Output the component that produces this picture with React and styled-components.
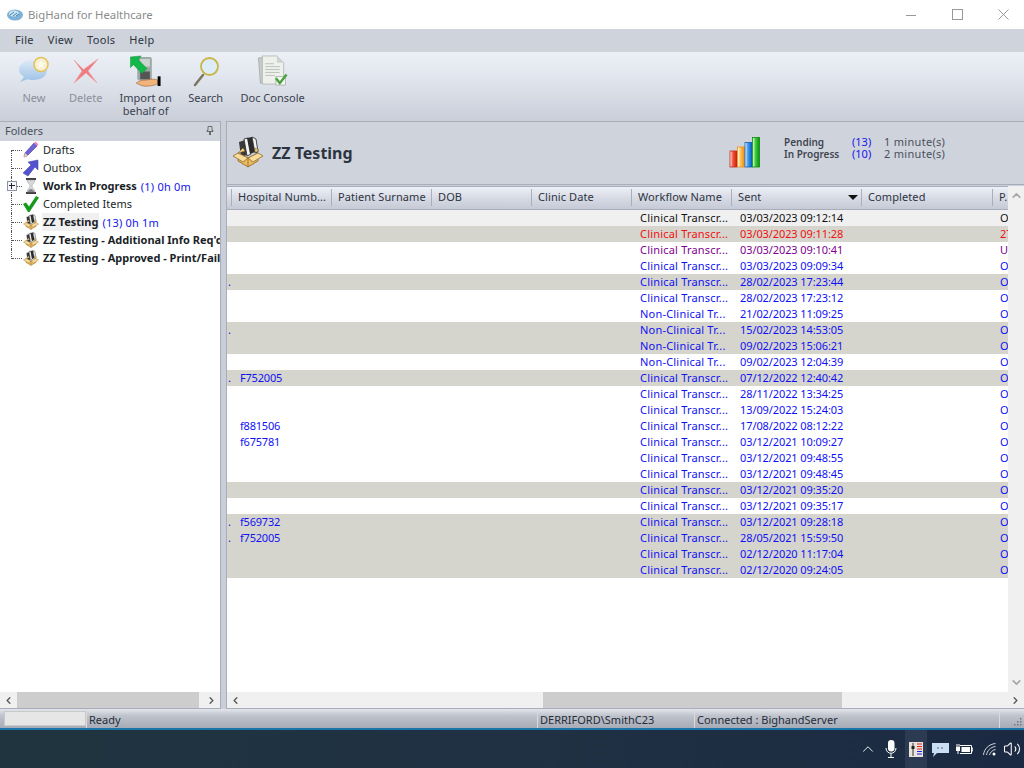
import React from "react";
import styled, { createGlobalStyle } from "styled-components";
import { ChevronLeft, ChevronRight, ChevronUp, ChevronDown, Volume2 } from "lucide-react";

const Global = createGlobalStyle`
  html, body { margin: 0; padding: 0; background: #fff; }
  * { box-sizing: border-box; }
  body { font-family: "Noto Sans", "Liberation Sans", sans-serif; font-size: 11px; }
`;

const Windowed = styled.div`
  width: 1024px; height: 768px; display: flex; flex-direction: column; overflow: hidden; background: #c9ced9;
`;
const TitleBar = styled.header`
  height: 29px; flex: none; background: #fff; display: flex; align-items: center; padding-left: 7px; gap: 5px; overflow: hidden;
`;
const AppTitle = styled.span` font-size: 11.3px; color: #8b8b8b; flex: 1; `;
const WinButton = styled.span`
  width: 46px; height: 29px; flex: none; display: flex; align-items: center; justify-content: center; margin-left: -5px; margin-right: ${p => p.$mr || 0}px;
`;
const MenuBar = styled.nav`
  height: 23px; flex: none; background: #cfd3dc; display: flex; align-items: center; padding: 0 0 2px 8px;
`;
const MenuItem = styled.span` padding: 0 7px; color: #2d3440; letter-spacing: .3px; `;
const Toolbar = styled.div`
  height: 69px; flex: none; padding: 3px 0 0 8px; display: flex; align-items: flex-start;
  background: linear-gradient(#eceff6, #e2e6ee 35%, #c9ced9);
`;
const ToolButton = styled.button`
  min-width: 51px; padding: 0 ${p => p.$pad ?? 9}px; border: 0; background: none; display: flex; flex-direction: column; align-items: center;
  font: inherit; line-height: 13px; color: ${p => (p.$off ? "#8b909b" : "#3a414d")};
  svg { display: block; margin-bottom: 4px; }
`;
const Main = styled.main`
  flex: 1; min-height: 0; display: grid; grid-template-columns: 221px 803px; column-gap: 0;
`;
const FolderPanel = styled.aside`
  display: flex; flex-direction: column; border-top: 1px solid #a8adb9; border-right: 1px solid #a8adb9; border-bottom: 1px solid #a8adb9; min-height: 0;
`;
const PanelHead = styled.div`
  height: 19px; flex: none; padding: 0 6px 2px 5px; display: flex; align-items: center; justify-content: space-between;
  color: #4a505c; background: #cfd3dc;
`;
const Tree = styled.ul`
  flex: 1; margin: 0; padding: 0; list-style: none; background: #fff; overflow: hidden;
`;
const TreeRow = styled.li`
  height: 18px; display: flex; align-items: center; white-space: nowrap; position: relative;
`;
const Guide = styled.span`
  width: 22px; height: 18px; flex: none; position: relative;
  &::before { content: ""; position: absolute; left: 11px; top: ${p => (p.$first ? 9 : 0)}px; height: ${p => (p.$first || p.$last ? 10 : 18)}px; border-left: 1px dotted #555; }
  &::after { content: ""; position: absolute; left: 12px; top: 9px; width: 10px; border-top: 1px dotted #555; }
`;
const Expander = styled.span`
  position: absolute; left: 7px; top: 4px; width: 10px; height: 10px; z-index: 1; background: #f4f5fa; border: 1px solid #8c92a0;
  &::before { content: ""; position: absolute; left: 1px; top: 3px; width: 6px; height: 2px; border-top: 1px solid #223; }
  &::after { content: ""; position: absolute; left: 3px; top: 1px; height: 6px; border-left: 1px solid #223; }
`;
const IconSlot = styled.span` width: 17px; height: 18px; flex: none; display: flex; align-items: center; justify-content: center; `;
const Label = styled.span`
  margin-left: 3px; padding: 0 1px; line-height: 18px; color: #1b1f28;
  font-weight: ${p => (p.$bold ? 700 : 400)};
  background: ${p => (p.$selected ? "#f0f0f0" : "transparent")};
`;
const Count = styled.span` margin-left: 3px; color: #1515ee; letter-spacing: .2px; `;
const HScroll = styled.div`
  height: 16px; flex: none; background: #f0f0f0; display: flex; align-items: center; justify-content: space-between; position: relative; color: #5a5a5a;
  svg { flex: none; margin: 0 3px; }
`;
const Thumb = styled.span`
  position: absolute; top: 0; bottom: 0; left: ${p => p.$l}px; width: ${p => p.$w}px; background: #cdcdcd;
`;
const RightPanel = styled.section`
  margin-left: 5px; display: flex; flex-direction: column; min-height: 0;
  border-top: 1px solid #a8adb9; border-left: 1px solid #a8adb9; border-bottom: 1px solid #a8adb9;
`;
const Banner = styled.div`
  height: 63px; flex: none; border-bottom: 1px solid #a8adb9; background: #cfd3dc; display: flex; align-items: center; padding: 0 0 2px 5px;
`;
const BannerTitle = styled.h1` margin: 2px 0 0 8px; flex: none; width: 457px; font-size: 16px; font-weight: 700; color: #2c3440; `;
const Stats = styled.div`
  margin: 0 0 8px 23px; display: grid; grid-template-columns: 68px 32px auto; line-height: 12px; color: #4a505c;
  b { font-size: 10px; font-weight: 600; color: #3f4652; }
  i { font-style: normal; color: #1515ee; }
  span { letter-spacing: .3px; }
`;
const TableWrap = styled.div`
  flex: 1; min-height: 0; display: flex; margin-top: 1px; background: #fff;
`;
const TableArea = styled.div` width: 781px; flex: none; display: flex; flex-direction: column; `;
const columns = "4px 100px 100px 100px 100px 100px 130px 131px 16px";
const HeadRow = styled.div`
  height: 24px; flex: none; display: grid; grid-template-columns: ${columns};
  border-top: 1px solid #a8adb9; border-bottom: 1px solid #a8adb9; background: linear-gradient(#eef0f7, #d5d9e3 55%, #c5cad6);
`;
const HeadCell = styled.div`
  border-left: ${p => (p.$nosep ? "0" : "1px solid #a9aeba")}; margin: 2px 0 3px; padding-left: 6px; line-height: 15px; color: #2d3440;
  white-space: nowrap; overflow: hidden; position: relative; letter-spacing: .1px;
`;
const SortArrow = styled.span`
  position: absolute; right: 3px; top: 6px; width: 0; height: 0; border-left: 5px solid transparent; border-right: 5px solid transparent; border-top: 5px solid #111;
`;
const Row = styled.div`
  height: 16px; display: grid; grid-template-columns: ${columns}; line-height: 16px;
  background: ${p => p.$bg}; color: ${p => p.$fg};
`;
const Cell = styled.div`
  padding-left: ${p => p.$pl ?? 9}px; white-space: nowrap; overflow: hidden; letter-spacing: ${p => p.$track || 0}px;
`;
const VScroll = styled.div`
  width: 16px; flex: none; margin-top: 0; background: #f0f0f0; display: flex; flex-direction: column; justify-content: space-between; align-items: center; padding: 3px 0; color: #a6a6a6;
`;
const Rows = styled.div` flex: 1; overflow: hidden; `;
const StatusBar = styled.footer`
  height: 19px; flex: none; display: flex; overflow: hidden; background: linear-gradient(#e4e6ec, #bfc3cc 35%, #a6abb6); color: #262c38; line-height: 21px;
`;
const StatusInset = styled.span` width: 82px; height: 15px; margin: 2px 0 0 4px; background: #e6e6e6; border: 1px solid #c9c9c9; `;
const StatusCell = styled.span`
  width: ${p => p.$w}px; flex: none; padding-left: 2px; border-left: 1px solid #d8dae0; overflow: hidden; white-space: nowrap;
`;
const Grip = styled.span` flex: 1; border-left: 1px solid #d8dae0; display: flex; align-items: flex-end; justify-content: flex-end; padding: 0 1px 1px 0; `;
const TaskBar = styled.div`
  height: 40px; flex: none; border-top: 2px solid #1a75a8; background: linear-gradient(90deg, #20343f, #1f3143 50%, #1b2a42);
  display: flex; align-items: center; justify-content: flex-end;
`;
const Tray = styled.span`
  width: ${p => p.$w}px; height: 38px; flex: none; display: flex; align-items: center; justify-content: center; color: #fff; padding-right: ${p => p.$pr || 0}px;
  background: ${p => (p.$on ? "#2d3b52" : "none")};
`;

const Logo = () => (
  <svg width="16" height="12" viewBox="0 0 16 12">
    <ellipse cx="8" cy="6" rx="8" ry="5.5" fill="#7fb2d6" />
    <ellipse cx="7" cy="4.5" rx="5" ry="3" fill="#cfe6f5" />
    <path d="M3 6l4-3M6 7l4-3M9 7l3-2" stroke="#3d7fb0" strokeWidth="1" />
  </svg>
);
const NewIcon = () => (
  <svg width="34" height="32" viewBox="0 0 34 32">
    <defs><linearGradient id="nb" x1="0" y1="0" x2="0" y2="1"><stop offset="0" stopColor="#dceaf8" /><stop offset="1" stopColor="#9cc1e4" /></linearGradient></defs>
    <path d="M2 15C2 8 9 5 16 5s14 3 14 10-7 10-14 10c-2 0-4 0-5-1l-8 3 4-5c-2-2-5-4-5-7z" fill="url(#nb)" />
    <circle cx="24" cy="9.500" r="7" fill="#f7efce" stroke="#e0c25a" strokeWidth="1.500" />
    <path d="M24 5l1.200 3 3.300.3-2.500 2 .8 3-2.800-1.700-2.800 1.700.8-3-2.500-2 3.300-.3z" fill="#fdfbf0" />
  </svg>
);
const DeleteIcon = () => (
  <svg width="30" height="32" viewBox="0 0 30 32">
    <path d="M3 5l9.500 9.500L27 4 17 16l9 12-11-10L3 28l8-12z" fill="#ee7c80" stroke="#f0a0a2" strokeWidth=".6" />
  </svg>
);
const ImportIcon = () => (
  <svg width="34" height="32" viewBox="0 0 34 33">
    <rect x="8" y="2" width="15" height="24" rx="2" fill="#9da9a4" />
    <rect x="11" y="4" width="10" height="8" fill="#cbd5cf" />
    <rect x="11" y="17" width="10" height="8" fill="#555" />
    <path d="M1 2l11-1-3 4 9 9-5 5-9-9-3 3z" fill="#12b84a" stroke="#0b8c36" strokeWidth=".5" />
    <path d="M7 29c3-3 6-3 9-3l7-1c3 0 5 0 6 1v4c-3 1-6 2-10 2-4 1-8-1-12-3z" fill="#f2b27c" stroke="#a06b3f" strokeWidth=".7" />
    <rect x="29" y="22" width="3" height="10" fill="#000" />
  </svg>
);
const SearchIcon = () => (
  <svg width="30" height="32" viewBox="0 0 30 32">
    <path d="M12 20L4 30" stroke="#7d7462" strokeWidth="2.500" strokeLinecap="round" />
    <circle cx="18.500" cy="11.500" r="8.500" fill="#dcecf8" stroke="#c9b64a" strokeWidth="1.800" />
  </svg>
);
const DocIcon = () => (
  <svg width="34" height="32" viewBox="0 0 34 33">
    <path d="M2 3l18-1 6 7v20H4z" fill="#c7cdc8" stroke="#8f9590" strokeWidth=".6" />
    <path d="M6 1h15l7 7v22H6z" fill="#eef0ec" stroke="#9aa09b" strokeWidth=".6" />
    <path d="M21 1v7h7z" fill="#cfd3cf" />
    <path d="M9 9h9M9 12h15M9 15h15M9 18h15M9 21h10" stroke="#b9c2bb" strokeWidth="1" />
    <rect x="20" y="22" width="10" height="9" fill="#f4f6f3" stroke="#8f9590" strokeWidth=".6" />
    <path d="M20 24l4 5 7-9" fill="none" stroke="#4aa13c" strokeWidth="2.500" />
  </svg>
);
const PencilIcon = () => (
  <svg width="17" height="18" viewBox="0 0 17 18">
    <path d="M2 16l1-4L12 2l3 3L5 15z" fill="#6f62d8" stroke="#3d3595" strokeWidth=".6" />
    <path d="M12 2l1.500-1.500 3 3L15 5z" fill="#f07fc0" />
    <path d="M2 16l1-4 3 3z" fill="#f1d7b0" />
  </svg>
);
const OutboxIcon = () => (
  <svg width="17" height="18" viewBox="0 0 17 18">
    <path d="M16 1v10l-3-3-7 9-5-3 8-8-3-3z" fill="#5353cf" stroke="#3b3ba8" strokeWidth=".5" />
  </svg>
);
const HourglassIcon = () => (
  <svg width="14" height="18" viewBox="0 0 14 18">
    <rect x="2" y="1" width="10" height="2" fill="#3e3e44" />
    <rect x="2" y="15" width="10" height="2" fill="#3e3e44" />
    <path d="M3 3h8c0 3-3 4-3 6s3 3 3 6H3c0-3 3-4 3-6S3 6 3 3z" fill="#d5d7da" stroke="#888" strokeWidth=".4" />
    <path d="M4 15c0-2 2-3 3-3s3 1 3 3z" fill="#85858c" />
  </svg>
);
const CheckIcon = () => (
  <svg width="17" height="18" viewBox="0 0 17 18">
    <path d="M1 9l3-1.500 3 4L14 1l3 1.500L7.500 17H6z" fill="#159a1c" />
  </svg>
);
const BoxIcon = ({ size = 16 }) => (
  <svg width={size} height={size} viewBox="0 0 32 32">
    <path d="M7 6l6-2 2 15-6 2z" fill="#3a3a3a" />
    <path d="M12 3l4-1 3 16-4 2z" fill="#f4f4f4" stroke="#222" strokeWidth=".8" />
    <path d="M15 2l5-1 3 15-5 2z" fill="#2c2c2c" />
    <path d="M20 1l4 2 2 13-3 1z" fill="#f4f4f4" stroke="#222" strokeWidth=".8" />
    <path d="M6 17l10 5 10-5v8l-10 6-10-6z" fill="#eab95e" stroke="#8f6a2c" strokeWidth=".8" />
    <path d="M16 22v9" stroke="#8f6a2c" strokeWidth=".8" />
    <path d="M6 17L1 20l10 6 5-4zM26 17l5 3-10 6-5-4z" fill="#f7dc9c" stroke="#8f6a2c" strokeWidth=".8" />
    <path d="M6 17l5-5 2 3zM27 14l-4-2v4z" fill="#f4d58b" stroke="#8f6a2c" strokeWidth=".6" />
  </svg>
);
const BarsIcon = () => (
  <svg width="32" height="32" viewBox="0 0 32 32">
    <defs>
      {[["r", "#f7553b", "#c81d10"], ["o", "#fdc65c", "#ee8b16"], ["b", "#3f9ff0", "#0b5fb5"], ["g", "#43d043", "#0a8a0a"]].map(([id, a, b]) => (
        <linearGradient key={id} id={id} x1="0" x2="1" y1="0" y2="0"><stop offset="0" stopColor="#fff" /><stop offset=".4" stopColor={a} /><stop offset="1" stopColor={b} /></linearGradient>
      ))}
    </defs>
    <rect x="1" y="15" width="7" height="16" fill="url(#r)" stroke="#b92a1a" strokeWidth=".8" />
    <rect x="8.500" y="11" width="7" height="20" fill="url(#o)" stroke="#e49120" strokeWidth=".8" />
    <rect x="16" y="6.500" width="7" height="24.500" fill="url(#b)" stroke="#0d5db0" strokeWidth=".8" />
    <rect x="23.500" y="1.500" width="7" height="29.500" fill="url(#g)" stroke="#0b8c0b" strokeWidth=".8" />
  </svg>
);
const Pin = () => (
  <svg width="8" height="9" viewBox="0 0 8 9"><path d="M2 .5h4v4h1v1H1v-1h1zM3.500 5.500h1V9h-1z" fill="none" stroke="#555" strokeWidth=".8" /></svg>
);
const MicIcon = () => (
  <svg width="12" height="18" viewBox="0 0 12 18">
    <rect x="3" y="0" width="6.500" height="11.500" rx="3.200" fill="#fff" />
    <path d="M1 8c0 7 10 7 10 0M6 13.500V17M3 17.500h6" fill="none" stroke="#fff" strokeWidth="1" />
  </svg>
);
const MixerIcon = () => (
  <svg width="14" height="15" viewBox="0 0 14 15">
    <rect width="14" height="15" fill="#e8e3dc" />
    <path d="M4 1v13" stroke="#333" strokeWidth="1" /><rect x="2.500" y="4" width="3" height="3" fill="#222" />
    <path d="M8 2h5M8 4.500h5M8 7h5" stroke="#d22" strokeWidth="1" />
    <path d="M8 9.500h5M8 12h5" stroke="#22d" strokeWidth="1" />
  </svg>
);
const ChatIcon = () => (
  <svg width="17" height="15" viewBox="0 0 17 15">
    <path d="M0 1h17v10H5l-4 4 1-4H0z" fill="#c9def2" />
    <circle cx="6" cy="6" r=".8" fill="#556" /><circle cx="10" cy="6" r=".8" fill="#556" />
  </svg>
);
const BatteryIcon = () => (
  <svg width="17" height="11" viewBox="0 0 17 11">
    <path d="M4 1.500h11.500v8H4M15.500 4h1.300v3h-1.300" fill="none" stroke="#fff" strokeWidth="1" />
    <rect x="5.500" y="3" width="8.500" height="5" fill="#fff" />
    <rect x="0" y="3" width="4" height="4" fill="#fff" /><path d="M1 3V0M3 3V0M2 7v3" stroke="#fff" strokeWidth="1" />
  </svg>
);
const WifiIcon = () => (
  <svg width="13" height="13" viewBox="0 0 13 13">
    <path d="M.5 12C1 6 6 1 12.500.5M3.500 12c.5-4 4-8 9-8.500M6.500 12c.5-2 2.500-5 6-5.500" fill="none" stroke="#cfd3da" strokeWidth="1" />
    <circle cx="11" cy="11" r="1.500" fill="#fff" />
  </svg>
);
const GripIcon = () => (
  <svg width="12" height="12" viewBox="0 0 12 12" fill="#70757f">
    {[[9, 3], [6, 6], [9, 6], [3, 9], [6, 9], [9, 9]].map(([x, y]) => <rect key={x + "-" + y} x={x} y={y} width="1.500" height="1.500" />)}
  </svg>
);
const Minimize = () => <svg width="10" height="10" viewBox="0 0 10 10"><path d="M0 5.500h10" stroke="#999" /></svg>;
const Maximize = () => <svg width="11" height="11" viewBox="0 0 11 11"><rect x=".5" y=".5" width="10" height="10" fill="none" stroke="#999" /></svg>;
const CloseX = () => <svg width="11" height="11" viewBox="0 0 11 11"><path d="M.5.5l10 10M10.500.5l-10 10" stroke="#999" /></svg>;

const folders = [
  { icon: <PencilIcon />, name: "Drafts", first: true },
  { icon: <OutboxIcon />, name: "Outbox" },
  { icon: <HourglassIcon />, name: "Work In Progress", bold: true, count: "(1) 0h 0m", expand: true },
  { icon: <CheckIcon />, name: "Completed Items" },
  { icon: <BoxIcon />, name: "ZZ Testing", bold: true, selected: true, count: "(13) 0h 1m" },
  { icon: <BoxIcon />, name: "ZZ Testing - Additional Info Req'd", bold: true },
  { icon: <BoxIcon />, name: "ZZ Testing - Approved - Print/Fail", bold: true, last: true },
];
const heads = ["Hospital Numb...", "Patient Surname", "DOB", "Clinic Date", "Workflow Name", "Sent", "Completed", "P."];
const CT = "Clinical Transcr...";
const NC = "Non-Clinical Tr...";
const rows = [
  [CT, "03/03/2023 09:12:14", "O", "", "", "#f0f0f0", "#111"],
  [CT, "03/03/2023 09:11:28", "27", "", "", "#d5d5cd", "#f01010"],
  [CT, "03/03/2023 09:10:41", "U", "", "", "#fff", "#800090"],
  [CT, "03/03/2023 09:09:34", "O"],
  [CT, "28/02/2023 17:23:44", "O", "", ".", "#d5d5cd"],
  [CT, "28/02/2023 17:23:12", "O"],
  [NC, "21/02/2023 11:09:25", "O"],
  [NC, "15/02/2023 14:53:05", "O", "", ".", "#d5d5cd"],
  [NC, "09/02/2023 15:06:21", "O", "", "", "#d5d5cd"],
  [NC, "09/02/2023 12:04:39", "O"],
  [CT, "07/12/2022 12:40:42", "O", "F752005", "..", "#d5d5cd"],
  [CT, "28/11/2022 13:34:25", "O"],
  [CT, "13/09/2022 15:24:03", "O"],
  [CT, "17/08/2022 08:12:22", "O", "f881506"],
  [CT, "03/12/2021 10:09:27", "O", "f675781"],
  [CT, "03/12/2021 09:48:55", "O"],
  [CT, "03/12/2021 09:48:45", "O"],
  [CT, "03/12/2021 09:35:20", "O", "", "", "#d5d5cd"],
  [CT, "03/12/2021 09:35:17", "O"],
  [CT, "03/12/2021 09:28:18", "O", "f569732", ".", "#d5d5cd"],
  [CT, "28/05/2021 15:59:50", "O", "f752005", ".", "#d5d5cd"],
  [CT, "02/12/2020 11:17:04", "O", "", "", "#d5d5cd"],
  [CT, "02/12/2020 09:24:05", "O", "", "", "#d5d5cd"],
];

export default function App() {
  return (
    <Windowed>
      <Global />
      <TitleBar>
        <Logo />
        <AppTitle>BigHand for Healthcare</AppTitle>
        <WinButton><Minimize /></WinButton>
        <WinButton><Maximize /></WinButton>
        <WinButton $mr={-2}><CloseX /></WinButton>
      </TitleBar>
      <MenuBar>
        {["File", "View", "Tools", "Help"].map(m => <MenuItem key={m}>{m}</MenuItem>)}
      </MenuBar>
      <Toolbar>
        <ToolButton $off><NewIcon />New</ToolButton>
        <ToolButton $off><DeleteIcon />Delete</ToolButton>
        <ToolButton $pad={8}><ImportIcon />Import on<br />behalf of</ToolButton>
        <ToolButton $pad={8.5}><SearchIcon />Search</ToolButton>
        <ToolButton><DocIcon />Doc Console</ToolButton>
      </Toolbar>
      <Main>
        <FolderPanel>
          <PanelHead>Folders<Pin /></PanelHead>
          <Tree>
            {folders.map(f => (
              <TreeRow key={f.name}>
                <Guide $first={f.first} $last={f.last} />
                {f.expand && <Expander />}
                <IconSlot>{f.icon}</IconSlot>
                <Label $bold={f.bold} $selected={f.selected}>{f.name}</Label>
                {f.count && <Count>{f.count}</Count>}
              </TreeRow>
            ))}
          </Tree>
          <HScroll>
            <ChevronLeft size={11} strokeWidth={3} />
            <Thumb $l={17} $w={182} />
            <ChevronRight size={11} strokeWidth={3} />
          </HScroll>
        </FolderPanel>
        <RightPanel>
          <Banner>
            <BoxIcon size={32} />
            <BannerTitle>ZZ Testing</BannerTitle>
            <BarsIcon />
            <Stats>
              <b>Pending</b><i>(13)</i><span>1 minute(s)</span>
              <b>In Progress</b><i>(10)</i><span>2 minute(s)</span>
            </Stats>
          </Banner>
          <TableWrap>
            <TableArea>
              <HeadRow>
                <HeadCell $nosep />
                {heads.map(h => (
                  <HeadCell key={h}>{h}{h === "Sent" && <SortArrow />}</HeadCell>
                ))}
              </HeadRow>
              <Rows>
                {rows.map(([wf, sent, p, hosp = "", dot = "", bg = "#fff", fg = "#1010f5"]) => (
                  <Row key={sent} $bg={bg} $fg={fg}>
                    <Cell $pl={1} $track={-1}>{dot}</Cell>
                    <Cell $track={-0.2}>{hosp}</Cell>
                    <Cell />
                    <Cell />
                    <Cell />
                    <Cell $track={0.2}>{wf}</Cell>
                    <Cell $track={-0.1}>{sent}</Cell>
                    <Cell />
                    <Cell $pl={8}>{p}</Cell>
                  </Row>
                ))}
              </Rows>
            </TableArea>
            <VScroll>
              <ChevronUp size={13} strokeWidth={3} />
              <ChevronDown size={13} strokeWidth={3} />
            </VScroll>
          </TableWrap>
          <HScroll>
            <ChevronLeft size={11} strokeWidth={3} />
            <Thumb $l={316} $w={299} />
            <ChevronRight size={11} strokeWidth={3} />
          </HScroll>
        </RightPanel>
      </Main>
      <StatusBar>
        <StatusInset />
        <StatusCell $w={451}>Ready</StatusCell>
        <StatusCell $w={157}>DERRIFORD\SmithC23</StatusCell>
        <StatusCell $w={305}>Connected : BighandServer</StatusCell>
        <Grip><GripIcon /></Grip>
      </StatusBar>
      <TaskBar>
        <Tray $w={18}><ChevronUp size={22} strokeWidth={1.2} /></Tray>
        <Tray $w={28}><MicIcon /></Tray>
        <Tray $w={22} $on><MixerIcon /></Tray>
        <Tray $w={26}><ChatIcon /></Tray>
        <Tray $w={26} $pr={4}><BatteryIcon /></Tray>
        <Tray $w={21}><WifiIcon /></Tray>
        <Tray $w={24}><Volume2 size={18} strokeWidth={1.4} /></Tray>
      </TaskBar>
    </Windowed>
  );
}
